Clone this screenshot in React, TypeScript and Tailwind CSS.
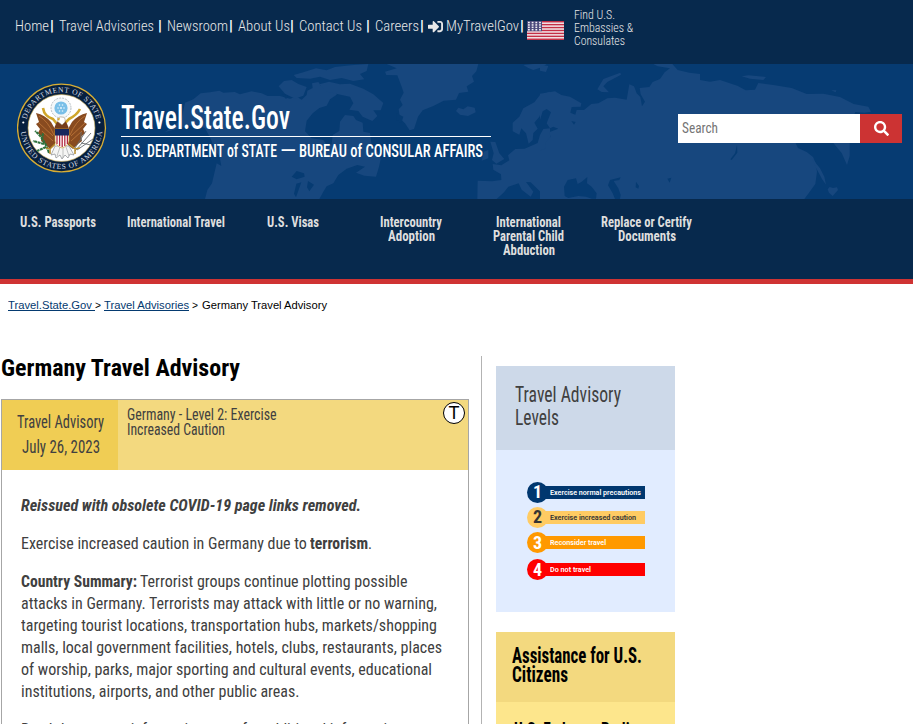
import React, { useLayoutEffect, useRef, useState } from "react";
import { FaSearch, FaSignInAlt } from "react-icons/fa";

type FitProps = { w: number; children: React.ReactNode; className?: string; inner?: string };

// One line of type, condensed horizontally so that it spans exactly `w` pixels.
function Fit({ w, children, className = "", inner = "" }: FitProps) {
  const ref = useRef<HTMLSpanElement>(null);
  const [scale, setScale] = useState(1);
  useLayoutEffect(() => {
    const el = ref.current;
    if (el && el.offsetWidth) {
      const current = new DOMMatrix(getComputedStyle(el).transform).a || 1;
      setScale(w / (el.getBoundingClientRect().width / current));
    }
  }, [w]);
  return (
    <span className={`block shrink-0 whitespace-nowrap ${className}`} style={{ width: w }}>
      <span ref={ref} className={`inline-block origin-left align-top ${inner}`} style={{ transform: `scaleX(${scale})` }}>
        {children}
      </span>
    </span>
  );
}

const Bar = ({ className = "" }: { className?: string }) => (
  <span className={`block w-1 shrink-0 text-center text-[15px] font-black text-white ${className}`}>|</span>
);

function Flag() {
  return (
    <svg viewBox="0 0 37 19" className="mt-[21px] ml-[3px] h-[19px] w-[37px] shrink-0">
      <rect width="37" height="19" fill="#f4eef0" />
      {[0, 1, 2, 3, 4, 5, 6].map((i) => (
        <rect key={i} y={i * 2.92} width="37" height="1.46" fill="#c42f46" />
      ))}
      <rect width="15" height="10.2" fill="#4b4a7c" />
      {[0, 1, 2, 3].map((r) =>
        [0, 1, 2, 3].map((c) => (
          <rect key={`${r}-${c}`} x={1 + c * 3.7} y={0.8 + r * 2.4} width="1.8" height="1.5" fill="#f3f1f6" />
        )),
      )}
    </svg>
  );
}

function WorldMap() {
  return (
    <svg viewBox="0 192 2739 405" preserveAspectRatio="none" className="absolute inset-0 h-full w-full">
      <g transform="translate(540 180)" fill="#17477e">
        <path d="M15 128 40 118 62 100 90 97 118 92 130 98 164 96 180 103 215 94 245 100 263 108 300 108 330 116 350 110 365 119 380 105 382 92 398 84 396 70 415 66 423 78 440 72 452 82 468 85 470 104 450 118 440 137 418 144 398 160 380 182 375 214 395 235 430 240 442 258 455 253 458 225 478 213 480 185 495 165 520 168 528 180 548 188 550 215 570 219 575 256 592 272 602 298 597 320 588 350 553 347 528 338 555 320 532 315 500 326 475 345 460 370 440 379 430 395 418 417H75L82 390 96 370 110 310 124 318 119 290 105 270 92 236 75 205 52 194 25 198-45 216-15 195 5 175Z" />
        <path d="M296 79 312 63 335 60 355 72 380 81 370 107 345 116 315 101ZM341 45 370 37 408 25 440 31 465 21 520 15 565 12 560 33 540 42 553 58 520 63 485 54 450 60 420 50 390 56 350 54ZM418 73 447 65 480 73 510 71 550 86 580 103 610 129 602 151 580 151 592 168 577 183 548 170 535 153 508 149 520 130 510 110 475 103 440 95Z" />
        <path d="M615 35 650 25 620 12H895L889 34 876 48 882 65 860 79 865 95 837 99 828 119 791 122 760 138 728 151 714 170 702 207 689 211 675 190 660 175 656 148 668 135 660 119 671 98 665 80 652 46 619 45ZM828 153 835 143 850 148 863 139 884 143 887 157 864 168 840 164Z" />
        <path d="M1110 95 1080 105 1063 127 1030 145 1018 170 998 188 998 214 1018 224 1024 205 1038 220 1046 251 1058 240 1060 219 1073 206 1063 188 1078 170 1088 145 1110 130ZM1110 205 1090 207 1080 225 1073 249 1034 266 1006 267 984 286 988 301 964 316 938 312 940 329 963 343 964 360 936 364 893 362 892 417H950L972 397 985 380 1016 370 1025 389 1052 410 1060 395 1038 366 1052 367 1084 398 1095 417H1110ZM931 245 946 246 958 280 973 297 949 311 936 300 941 280ZM912 275 925 270 925 295 905 302ZM1030 15 1060 12 1100 12 1085 22 1060 30 1045 24Z" />
      </g>
      <g transform="translate(1620 180)" fill="#17477e">
        <path d="M0 101 45 94 64 105 90 110 124 130 122 140 95 141 91 158 106 164 110 150 132 150 154 132 175 130 202 115 225 113 260 119 268 73 282 79 290 100 301 111 306 139 315 125 302 103 299 84 328 81 338 66 360 57 374 37 390 25 353 19 340 12 397 12 413 30 448 38 480 42 480 60 510 65 540 60 592 77 617 91 645 89 655 69 705 76 755 84 800 102 850 101 900 111 941 132 985 140 993 155 973 158 946 156 937 177 903 195 920 222 929 248 929 288 921 315 905 279 880 249 848 241 815 248 767 250 774 264 800 276 819 291 827 309 831 335 826 372 807 398 793 417H0L0 272 18 265 15 250 31 231 29 216 55 206 40 200 30 205 20 190 33 157 20 147 8 154 0 180Z" />
        <path d="M172 88 190 57 241 38 243 44 202 66 190 79 207 97 185 96ZM605 49 625 46 678 51 670 60 630 56ZM874 91 889 91 887 97ZM817 296 840 325 853 350 858 374 846 357 828 323ZM863 388 869 381 879 384 891 382 894 390 878 408 867 398ZM0 14 25 18 18 36 0 32Z" />
      </g>
      <g fill="#063b72">
        <path d="M875 530 890 513 912 520 914 530 890 538ZM889 551 904 547 894 575 888 592 882 581ZM924 543 942 554 928 574 921 562ZM1190 340 1210 350 1204 369 1190 360ZM843 280 865 289 858 297Z" />
        <path d="M1908 545 1917 558 1915 566 1907 562ZM2002 536 2014 533 2009 548ZM2211 435 2212 458 2195 480 2191 478 2205 460ZM1714 363 1727 366 1722 374Z" />
        <path d="M1692 560 1703 540 1728 535 1733 552 1745 545 1762 531 1761 550 1775 560 1790 580 1788 596H1775L1758 590 1735 588 1705 594 1694 588ZM1824 556 1830 540 1862 532 1858 540 1841 543 1855 565 1862 585 1860 597H1845L1838 580Z" />
      </g>
    </svg>
  );
}

function Seal() {
  return (
    <svg viewBox="0 0 90 90" className="ml-[17px] h-[90px] w-[90px] shrink-0">
      <circle cx="44.5" cy="45" r="44.6" fill="#d9ae35" />
      <circle cx="44.5" cy="45" r="43.3" fill="#07203f" />
      <circle cx="44.5" cy="45" r="33.5" fill="#fff" stroke="#c9a84b" strokeWidth=".6" />
      <defs>
        <path id="sealTop" d="M8.7 45a35.8 35.8 0 0 1 71.6 0" />
        <path id="sealBottom" d="M3.6 45a40.9 40.9 0 0 0 81.8 0" />
      </defs>
      <g fill="#d6dce4" fontFamily="Liberation Serif, serif" fontSize="7.6">
        <text textAnchor="middle" textLength="95">
          <textPath href="#sealTop" startOffset="50%" textLength="95">DEPARTMENT OF STATE</textPath>
        </text>
        <text textAnchor="middle" textLength="121">
          <textPath href="#sealBottom" startOffset="50%" textLength="121">UNITED STATES OF AMERICA</textPath>
        </text>
      </g>
      <circle cx="6.3" cy="39.5" r="1.1" fill="#fff" />
      <circle cx="82.4" cy="39.5" r="1.1" fill="#fff" />
      <circle cx="44" cy="25" r="10" fill="#f4f8fa" stroke="#8b969c" strokeWidth=".6" strokeDasharray="2 1" />
      <circle cx="44" cy="25" r="6.6" fill="#79bfe8" />
      <g fill="#e4f4fc">
        <circle cx="44" cy="25" r="1" />
        <circle cx="41" cy="25" r=".8" /><circle cx="47" cy="25" r=".8" />
        <circle cx="42.5" cy="22" r=".8" /><circle cx="45.5" cy="22" r=".8" />
        <circle cx="42.5" cy="28" r=".8" /><circle cx="45.5" cy="28" r=".8" />
      </g>
      <path d="M26 25C27 32 31 34 36 36L40 41M63 26C60 32 56 34 52 36L48 40" fill="none" stroke="#d0a62b" strokeWidth="2.6" />
      <path d="M19 30Q28 32 34 39L38 46 38 62 33 66 28 61 24 58 25 54 21 50 23 46 19 41 22 39ZM70 30Q61 32 55 39L51 46 51 62 56 66 61 61 65 58 64 54 68 50 66 46 70 41 67 39Z" fill="#884b20" />
      <path d="M22 33Q31 38 37 52M22 40 36 53M25 48 36 58M68 33Q59 38 53 52M68 40 54 53M65 48 54 58" fill="none" stroke="#c1783a" strokeWidth=".8" />
      <path d="M37 48Q38 38 44.5 36 51 38 52 48Z" fill="#753d1b" />
      <path d="M40 38Q41 33 45 34 49 34 48 39L45 42Z" fill="#fff" stroke="#887861" strokeWidth=".5" />
      <path d="M40 35.5 43 35 42 38Z" fill="#d0a62b" />
      <path d="M38 63 34 72 38 71 39 75 43 72 45 76 48 72 51 75 53 71 57 72 52 63Z" fill="#f5f5f4" stroke="#777b80" strokeWidth=".6" />
      <path d="M43 64 40 73M46 64V75M49 64 52 73" stroke="#9a9ea0" strokeWidth=".6" />
      <path d="M38 46H52V58Q51 63 45 65 39 63 38 58Z" fill="#fff" stroke="#caa036" strokeWidth=".7" />
      <path d="M40 52V61M42.6 52V63M45.2 52V64M47.8 52V63M50.4 52V61" stroke="#b22b40" strokeWidth="1.3" />
      <path d="M38 46H52V52.5H38Z" fill="#17285d" />
      <path d="M32 70Q27 55 18 48M27 61 16 58M29 64 20 68M25 57 26 50" fill="none" stroke="#2d713c" strokeWidth="2.1" strokeDasharray="3 .6" />
      <path d="M58 68 74 50M58 65 69 48M60 67 76 56M64 60 74 62M64 58 64 49" fill="none" stroke="#686d70" strokeWidth=".9" />
      <path d="M38 61 33 66 29 65M33 66V71M52 61 58 66 63 65M58 66V71" fill="none" stroke="#b88d2c" strokeWidth="1.5" />
    </svg>
  );
}

const menu: [string, number][][] = [
  [["U.S. Passports", 76]],
  [["International Travel", 98]],
  [["U.S. Visas", 52]],
  [["Intercountry", 62], ["Adoption", 47]],
  [["International", 65], ["Parental Child", 71], ["Abduction", 52]],
  [["Replace or Certify", 91], ["Documents", 58]],
];

const Level = ({ n, w, text, bar, dark = "text-white" }: { n: number; w: number; text: string; bar: string; dark?: string }) => (
  <div className={`flex h-5 items-center ${dark}`}>
    <span className={`z-10 flex h-[21px] w-[21px] shrink-0 items-center justify-center rounded-full font-bold ${bar}`}>
      <span className="text-[18px] leading-5">{n}</span>
    </span>
    <span className={`-ml-2 flex h-[13px] w-[105px] items-center pl-[10px] ${bar}`}>
      <Fit w={w} className="font-[Roboto,sans-serif] text-[7.5px] leading-[13px] font-semibold">{text}</Fit>
    </span>
  </div>
);

export default function App() {
  return (
    <div className="h-[724px] w-[913px] overflow-hidden bg-white font-['Roboto_Condensed',Roboto,sans-serif] text-[#404040]">
      <div className="flex h-16 bg-[#07294d] pl-[15px] text-sm leading-[22px] font-light text-[#e8e8e8]">
        <div className="flex pt-[15px]">
          <Fit w={34}>Home</Fit>
          <Bar className="ml-px" />
          <Fit w={95} className="ml-[5px]">Travel Advisories</Fit>
          <Bar className="ml-1" />
          <Fit w={61} className="ml-[5px]">Newsroom</Fit>
          <Bar className="ml-[1px]" />
          <Fit w={52} className="ml-[5px]">About Us</Fit>
          <Bar className="ml-0" />
          <Fit w={63} className="ml-[5px]">Contact Us</Fit>
          <Bar className="ml-1" />
          <Fit w={44} className="ml-[5px]">Careers</Fit>
          <Bar className="ml-px" />
          <FaSignInAlt className="mt-1 ml-1 h-[15px] w-[15px] shrink-0" />
          <Fit w={73} className="ml-[3px]">MyTravelGov</Fit>
          <Bar className="ml-px" />
        </div>
        <Flag />
        <div className="ml-2.5 pt-[9px] text-xs leading-[13px]">
          <Fit w={41}>Find U.S.</Fit>
          <Fit w={59}>Embassies &amp;</Fit>
          <Fit w={51}>Consulates</Fit>
        </div>
      </div>

      <header className="relative flex h-[135px] items-center bg-[#063b72] pb-[7px] text-white">
        <WorldMap />
        <div className="relative flex w-full items-center">
          <Seal />
          <div className="ml-[14px] w-[370px] pt-1">
            <Fit w={169} className="h-[37px] text-[33px] leading-[40px] font-medium">Travel.State.Gov</Fit>
            <div className="mt-px h-px bg-white" />
            <div className="flex pt-0.5 text-lg leading-[24px] font-medium">
              <Fit w={156}>U.S. DEPARTMENT of STATE</Fit>
              <Fit w={16} className="ml-[3px]">—</Fit>
              <Fit w={184} className="ml-[3px]">BUREAU of CONSULAR AFFAIRS</Fit>
            </div>
          </div>
          <div className="ml-[187px] flex h-[29px] w-[224px]">
            <div className="w-[182px] bg-white pl-1 text-sm leading-[29px] text-[#757575]">
              <Fit w={36}>Search</Fit>
            </div>
            <div className="flex w-[42px] items-center justify-center bg-[#cc3333]">
              <FaSearch className="h-[15px] w-[15px]" />
            </div>
          </div>
        </div>
      </header>

      <nav className="flex h-[85px] border-b-[5px] border-[#cf3333] bg-[#07294d] pt-4 text-sm leading-[14px] font-bold text-[#dedede]">
        {menu.map((lines) => (
          <div key={lines[0][0]} className="-ml-[1.5px] flex w-[119.2px] flex-col items-center">
            {lines.map(([t, w]) => <Fit key={t} w={w}>{t}</Fit>)}
          </div>
        ))}
      </nav>

      <div className="flex h-[72px] pt-[14px] pl-2 font-['Liberation_Sans',Arial,sans-serif] text-[11px] leading-[15px] text-black">
        <Fit w={87} className="text-[#043a70]" inner="underline">Travel.State.Gov&nbsp;</Fit>
        <Fit w={6}>&gt;</Fit>
        <Fit w={85} className="ml-[3px] text-[#043a70]" inner="underline">Travel Advisories</Fit>
        <Fit w={6} className="ml-[3px]">&gt;</Fit>
        <Fit w={125} className="ml-1">Germany Travel Advisory</Fit>
      </div>

      <div className="flex h-[368px]">
        <main className="w-[481px] pl-px">
          <Fit w={239} className="h-[43px] pt-px text-2xl leading-[23px] font-bold text-black">Germany Travel Advisory</Fit>
          <article className="h-[340px] w-[468px] border border-[#a6a6a6]">
            <div className="flex h-[70px] bg-[#f3d97f]">
              <div className="flex w-[116px] flex-col items-center bg-[#f0cd54] pt-[10px] pl-px text-[17.5px] leading-[25px]">
                <Fit w={87}>Travel Advisory</Fit>
                <Fit w={78}>July 26, 2023</Fit>
              </div>
              <div className="flex-1 pt-[7px] pl-[9px] text-base leading-[15px]">
                <Fit w={149.5}>Germany - Level 2: Exercise</Fit>
                <Fit w={98}>Increased Caution</Fit>
              </div>
              <div className="mt-0.5 mr-[3px] flex h-[22px] w-[22px] justify-center rounded-full border border-black bg-white font-['Liberation_Sans',Arial,sans-serif] text-lg leading-5 text-black">T</div>
            </div>
            <div className="pt-[25px] pl-[18.6px] text-base leading-[22px]">
              <Fit w={340} className="font-bold italic">Reissued with obsolete COVID-19 page links removed.</Fit>
              <div className="mt-4 flex">
                <Fit w={289.5}>Exercise increased caution in Germany due to&nbsp;</Fit>
                <Fit w={58} className="font-bold">terrorism</Fit>
                <Fit w={4}>.</Fit>
              </div>
              <div className="mt-4 flex">
                <Fit w={116} className="font-bold">Country Summary:</Fit>
                <Fit w={267.5} className="ml-[3px]">Terrorist groups continue plotting possible</Fit>
              </div>
              <Fit w={416}>attacks in Germany. Terrorists may attack with little or no warning,</Fit>
              <Fit w={416}>targeting tourist locations, transportation hubs, markets/shopping</Fit>
              <Fit w={421}>malls, local government facilities, hotels, clubs, restaurants, places</Fit>
              <Fit w={411}>of worship, parks, major sporting and cultural events, educational</Fit>
              <Fit w={278.5}>institutions, airports, and other public areas.</Fit>
              <Fit w={382} className="mt-4">Read the country information page for additional information</Fit>
            </div>
          </article>
        </main>
        <aside className="border-l border-[#b3b3b3] pt-2.5 pl-[14px]">
          <section className="h-[246px] w-[179px] bg-[#e1ecff]">
            <div className="h-[84px] bg-[#cdd9e9] pt-[17px] pl-[19px] text-[22px] leading-[23px]">
              <Fit w={106}>Travel Advisory</Fit>
              <Fit w={44}>Levels</Fit>
            </div>
            <div className="pt-8 pl-[31px]">
              <Level n={1} w={91} text="Exercise normal precautions" bar="bg-[#00376f]" />
              <div className="h-[5px]" />
              <Level n={2} w={86} text="Exercise increased caution" bar="bg-[#ffcb63]" dark="text-[#333333]" />
              <div className="h-[5.5px]" />
              <Level n={3} w={56} text="Reconsider travel" bar="bg-[#ff9900]" />
              <div className="h-[7px]" />
              <Level n={4} w={41} text="Do not travel" bar="bg-[#ff0000]" />
            </div>
          </section>
          <section className="mt-5 h-[92px] w-[179px] overflow-hidden bg-[#fde68c] font-bold text-black">
            <div className="h-[70px] bg-[#f3d97f] pt-[14px] pl-4 text-[22px] leading-[19px]">
              <Fit w={130}>Assistance for U.S.</Fit>
              <Fit w={56}>Citizens</Fit>
            </div>
            <Fit w={123} className="mt-4 ml-[18px] text-base leading-[22px]">U.S. Embassy Berlin</Fit>
          </section>
        </aside>
      </div>
    </div>
  );
}
